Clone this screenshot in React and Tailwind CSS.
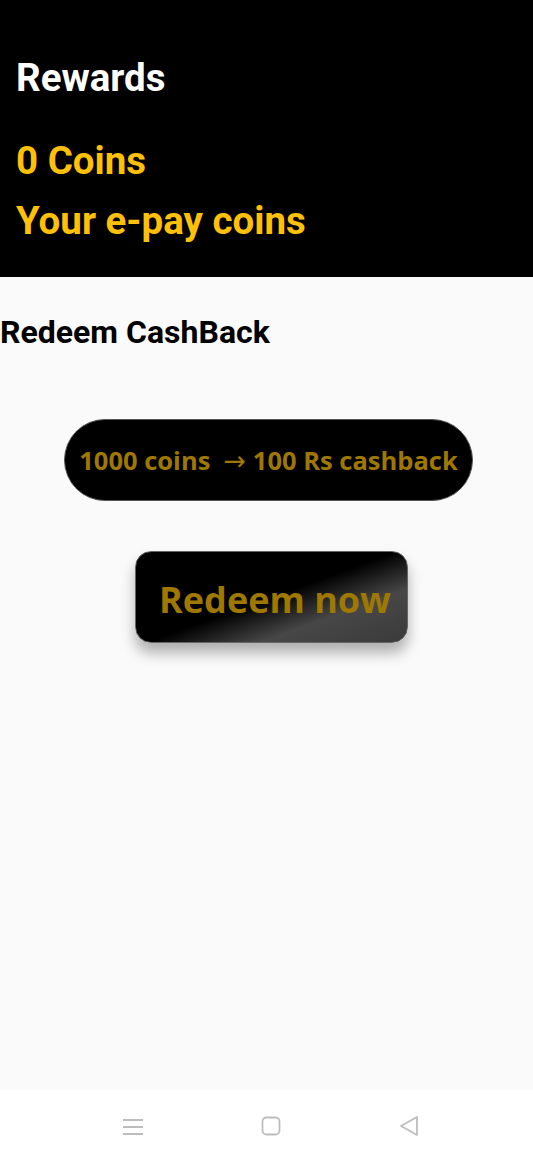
import React from "react";

export default function App() {
  return (
    <div className="w-[533px] h-[1159px] flex flex-col bg-[#fafafa]" style={{ fontFamily: "Roboto, sans-serif" }}>
      <div className="h-[277px] bg-black px-4 pt-[55px] flex flex-col">
        <div className="text-white font-bold text-[38.5px] leading-[46px]">Rewards</div>
        <div className="text-[#ffc107] font-bold text-[38.5px] leading-[46px] mt-[37px]">0 Coins</div>
        <div className="text-[#ffc107] font-bold text-[38.5px] leading-[46px] mt-[14px]">Your e-pay coins</div>
      </div>
      <div className="flex-1 flex flex-col">
        <div className="text-black font-bold text-[32px] leading-[38px] pt-[36px]">Redeem CashBack</div>
        <div className="flex justify-center mt-[68px] pl-[4px]">
          <div
            className="w-[409px] h-[82px] rounded-full bg-black flex items-center justify-center text-[#9e7800] font-bold text-[25.5px] border border-[#555]"
            style={{ fontFamily: "'Open Sans', sans-serif" }}
          >
            <span className="whitespace-pre">
              {"1000 coins  "}
              <span className="text-[27px] leading-none font-normal" style={{ fontFamily: "'DejaVu Sans', sans-serif" }}>→</span>
              {" 100 Rs cashback"}
            </span>
          </div>
        </div>
        <div className="flex justify-center mt-[50px] pl-[10px]">
          <div
            className="w-[273px] h-[92px] rounded-[16px] flex items-center justify-center pl-[7px] pt-[5px] text-[#9e7800] font-bold text-[36px] shadow-[0_10px_14px_rgba(0,0,0,0.3)] bg-[linear-gradient(160deg,#000_0%,#000_50%,#474747_72%,#3a3a3a_100%)] border border-[#666]"
            style={{ fontFamily: "'Open Sans', sans-serif" }}
          >
            Redeem now
          </div>
        </div>
      </div>
      <div className="h-[69px] bg-white flex items-center justify-center gap-[117px] pl-[8px] pt-[2px]">
        <svg width="22" height="20" viewBox="0 0 22 20" className="mt-[2px]">
          <path d="M1 3h20M1 10h20M1 17h20" stroke="#bdbdbd" strokeWidth="1.8" />
        </svg>
        <svg width="20" height="20" viewBox="0 0 20 20">
          <rect x="1.5" y="1.5" width="17" height="17" rx="4" fill="none" stroke="#bdbdbd" strokeWidth="1.8" />
        </svg>
        <svg width="22" height="22" viewBox="0 0 22 22">
          <path d="M19 2 L3 11 L19 20 Z" fill="none" stroke="#bdbdbd" strokeWidth="1.8" strokeLinejoin="round" />
        </svg>
      </div>
    </div>
  );
}
